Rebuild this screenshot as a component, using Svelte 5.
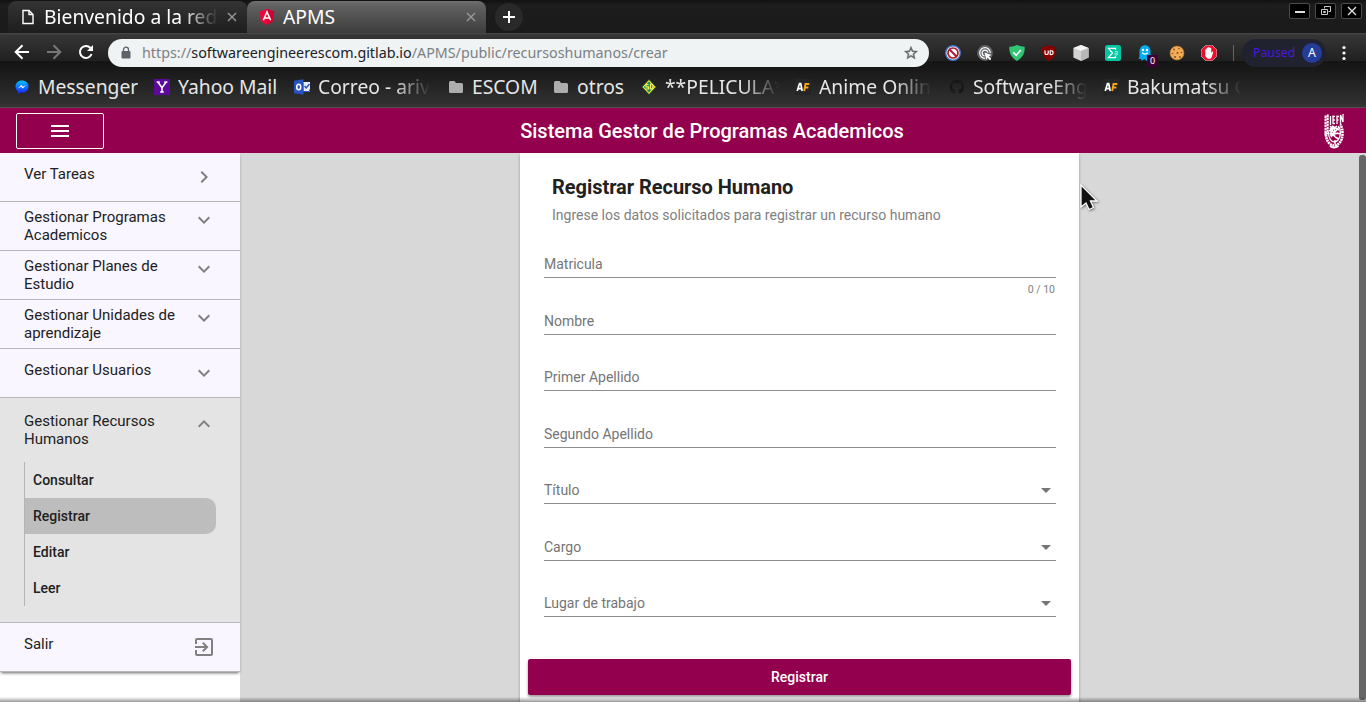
<script>
  const bookmarks = [
    { name: 'Messenger', icon: 'messenger', width: 140 },
    { name: 'Yahoo Mail', icon: 'yahoo', width: 140 },
    { name: 'Correo - ariv', icon: 'outlook', width: 154, fade: true },
    { name: 'ESCOM', icon: 'folder', width: 105 },
    { name: 'otros', icon: 'folder', width: 88 },
    { name: '**PELICULA*', icon: 'movie', width: 154, fade: true },
    { name: 'Anime Onlin', icon: 'anime', width: 154, fade: true },
    { name: 'SoftwareEng', icon: 'github', width: 154, fade: true },
    { name: 'Bakumatsu G', icon: 'anime', width: 154, fade: true }
  ];
  const extensions = ['block', 'click', 'shield', 'ublock', 'cube', 'sigma', 'ghost', 'cookie', 'adblock'];
  const menu = [
    { label: 'Ver Tareas', icon: 'right' },
    { label: 'Gestionar Programas Academicos', icon: 'down', tall: true },
    { label: 'Gestionar Planes de Estudio', icon: 'down', tall: true },
    { label: 'Gestionar Unidades de aprendizaje', icon: 'down', tall: true },
    { label: 'Gestionar Usuarios', icon: 'down' }
  ];
  const submenu = ['Consultar', 'Registrar', 'Editar', 'Leer'];
  const fields = [
    { label: 'Matricula', hint: '0 / 10' },
    { label: 'Nombre' },
    { label: 'Primer Apellido' },
    { label: 'Segundo Apellido' },
    { label: 'Título', select: true },
    { label: 'Cargo', select: true },
    { label: 'Lugar de trabajo', select: true }
  ];
</script>

{#snippet chevron(dir)}
  <svg class="chevron" width="24" height="24" viewBox="0 0 24 24" fill="#808080">
    {#if dir === 'right'}
      <path d="M10 6 8.59 7.41 13.17 12l-4.58 4.59L10 18l6-6z" />
    {:else if dir === 'down'}
      <path d="M16.59 8.59 12 13.17 7.41 8.59 6 10l6 6 6-6z" />
    {:else}
      <path d="m12 8-6 6 1.41 1.41L12 10.83l4.59 4.58L18 14z" />
    {/if}
  </svg>
{/snippet}

{#snippet close()}
  <svg width="10" height="10" viewBox="0 0 10 10" stroke="#999" stroke-width="1.4"><path d="M1 1l8 8M9 1l-8 8" /></svg>
{/snippet}

{#snippet bookmarkIcon(kind)}
  <svg width="16" height="16" viewBox="0 0 16 16">
    {#if kind === 'messenger'}
      <defs>
        <linearGradient id="msg" x1="0" y1="0" x2="0" y2="1"><stop offset="0" stop-color="#00c2ff" /><stop offset="1" stop-color="#1a22ff" /></linearGradient>
      </defs>
      <path d="M8 1.400C4.300 1.400 1.500 4 1.500 7.400c0 2 .9 3.600 2.400 4.700v2.500l2.200-1.200c.6.2 1.200.2 1.900.2 3.700 0 6.500-2.700 6.500-6.200S11.700 1.400 8 1.400z" fill="url(#msg)" />
      <path d="M3.900 9.500 7.200 6l1.700 1.700L12.100 6 8.700 9.500 7.100 7.800z" fill="#fff" />
    {:else if kind === 'yahoo'}
      <rect width="16" height="16" fill="#5b0a9b" />
      <path d="M4 3.200 8 8.800l4-5.600M8 8.500V13M2.600 3h3.200M10.200 3h3.200M6.200 13h3.600" stroke="#fff" stroke-width="1.500" fill="none" />
    {:else if kind === 'outlook'}
      <path d="M9 3h7v10H9z" fill="#e8eefb" />
      <path d="m10.500 7 1.700 1.800L15.500 5" fill="none" stroke="#2a56c6" stroke-width="1.500" />
      <path d="M9 13V3.500M9 12.500h6.500v-2" fill="none" stroke="#2a56c6" />
      <path d="m0 1.800 9.500-1.600v15.600L0 14.200z" fill="#2853c3" />
      <ellipse cx="4.700" cy="8" rx="2" ry="2.800" fill="none" stroke="#fff" stroke-width="1.500" />
    {:else if kind === 'folder'}
      <path d="M1 3.500q0-1.500 1.500-1.500h4l1.500 2h5.500q1.500 0 1.500 1.500v7q0 1.500-1.500 1.500h-11Q1 14 1 12.500z" fill="#adadad" />
    {:else if kind === 'movie'}
      <path d="m8 .5 7 7.500-7 7.500L1 8z" fill="#f1e622" stroke="#164e37" stroke-width=".7" />
      <path d="m8 2.500 5.200 5.500L8 13.500 2.800 8z" fill="#1d8f6c" />
      <path d="M7.500 5.500H5v2.300h2.500V10H4.500M9.500 5v5q2.500 0 2.500-2.500T9.500 5" fill="none" stroke="#f8f260" stroke-width="1.200" />
    {:else if kind === 'anime'}
      <rect width="16" height="16" rx="2" fill="#252525" />
      <path d="m2.200 12 2.300-7.500h1.200L7.200 12M3 9.700h3.600" fill="none" stroke="#fff" stroke-width="1.700" />
      <path d="m9.200 12 1.300-7h3.800M9.700 8.500h3.700" fill="none" stroke="#f7a21b" stroke-width="1.900" />
    {:else}
      <path d="M8 .8a7.200 7.200 0 0 0-2.300 14v-2c-2 .4-2.500-.8-2.700-1.400l-1-.8c1.200-.2 1.600.8 2.100 1.300.5.500 1.200.4 1.700.1.100-.6.300-.9.600-1.100-2.100-.3-3.300-1.200-3.300-3.700 0-.8.300-1.500.8-2-.1-.4-.2-1.200.1-2 .9 0 1.500.5 2 .8 1.300-.3 2.700-.3 4 0 .7-.4 1.300-.8 2-.8.300.8.200 1.600.1 2 .5.5.8 1.200.8 2 0 2.500-1.200 3.400-3.300 3.700.4.300.7.900.7 1.800v2A7.200 7.200 0 0 0 8 .8z" fill="#171717" />
    {/if}
  </svg>
{/snippet}

{#snippet extensionIcon(kind)}
  <svg width="16" height="16" viewBox="0 0 16 16">
    {#if kind === 'block'}
      <circle cx="8" cy="8" r="7.300" fill="#fff" stroke="#3e75c2" stroke-width="1.400" />
      <circle cx="8" cy="8" r="5" fill="none" stroke="#a7192c" stroke-width="1.700" />
      <path d="m4.500 4.500 7 7" stroke="#a7192c" stroke-width="1.900" />
    {:else if kind === 'click'}
      <circle cx="8" cy="8" r="7.900" fill="#606266" />
      <g fill="none" stroke="#fff" stroke-width="1.200"><path d="M8 13.300A5.300 5.300 0 1 1 13.300 8M7.500 10.800A2.900 2.900 0 1 1 10.900 7.500" /></g>
      <path d="m7.500 7.500 7 2.600-2.700 1.200 2.500 2.700-1.200 1.200-2.600-2.600-1.100 2.500z" fill="#fff" />
    {:else if kind === 'shield'}
      <path d="M8 0q4 1.800 7.700 1.800C16 8.500 13.500 13 8 16 2.500 13 0 8.500.3 1.800 4 1.800 8 0 8 0z" fill="#2fc574" />
      <path d="M4.300 7.300 7.200 10.200l4.600-5.200" fill="none" stroke="#fff" stroke-width="1.700" />
    {:else if kind === 'ublock'}
      <path d="M8 0q3 1.800 7 2c.2 7-1.500 11.300-7 14C2.500 13.300.8 9 1 2q4-.2 7-2z" fill="#870000" />
      <path d="M4 5.500v2.700q0 1.300 1.600 1.300t1.600-1.300V5.500" fill="none" stroke="#fff" stroke-width="1.200" />
      <path d="M9.200 5.800q2.900-.3 2.900 1.900T9.200 9.500z" fill="none" stroke="#fff" stroke-width="1.200" />
    {:else if kind === 'cube'}
      <path d="m8 0 7.600 3v9.500L8 16 .4 12.500V3z" fill="#d2d2d2" />
      <path d="m8 0 7.600 3L8 6 .4 3z" fill="#f4f4f4" /><path d="m8 6 7.600-3v9.500L8 16z" fill="#b8b8b8" />
    {:else if kind === 'sigma'}
      <rect width="16" height="16" rx="2.500" fill="#05c6a2" />
      <path d="M10.500 5V3.300H3.500L7.500 8l-4 4.700h7V11" fill="none" stroke="#fff" stroke-width="1.300" />
      <path d="M10 6.500h2.300V10H10V8.200h2" fill="none" stroke="#95ead9" stroke-width="1" />
    {:else if kind === 'ghost'}
      <path d="M2.500 6.500C2.500-1.700 13.500-1.700 13.500 6.500V12l1 3-3-1-2 2-2-2-3 1.800-.5-2-2.500.2 1-2.500z" fill="#00aef0" />
      <circle cx="6" cy="5" r="1.200" fill="#fff" /><circle cx="10" cy="5" r="1.200" fill="#fff" />
      <path d="M5 7.800q3 2.600 6 0" fill="none" stroke="#fff" stroke-width="1.200" />
    {:else if kind === 'cookie'}
      <circle cx="8" cy="8" r="7" fill="#f0ad55" stroke="#b9722b" stroke-width=".6" />
      <g fill="#8a4d1c"><circle cx="5" cy="4.500" r=".9" /><circle cx="10" cy="3.600" r=".8" /><circle cx="8.500" cy="8" r="1" /><circle cx="3.500" cy="8.500" r=".8" /><circle cx="12.500" cy="7.500" r=".8" /><circle cx="6" cy="12" r="1" /><circle cx="11" cy="12" r=".9" /></g>
    {:else}
      <path d="M4.800.2h6.400l4.600 4.600v6.400l-4.600 4.600H4.800L.2 11.200V4.800z" fill="#ee0d2c" stroke="#fff" stroke-width=".5" />
      <path d="M4.300 8V4.500q.7-.7 1.300 0V3q.7-.8 1.500 0v-.6q.8-.8 1.600 0V3q.8-.7 1.500 0v5l1-1.500q1.200-.3 1 .6L10.800 12 9.500 13.700h-3L4.300 11z" fill="#fff" />
    {/if}
  </svg>
{/snippet}

<div class="screen">
  <div class="browser">
    <div class="tabstrip">
      <div class="tab">
        <svg width="12" height="16" viewBox="0 0 12 16" fill="none" stroke="#fff" stroke-width="1.400"><path d="M1 1.500h6l4 4v9H1zM7 1.500v4h4" /></svg>
        <span class="tabname fade">Bienvenido a la red</span>
        {@render close()}
      </div>
      <div class="tab active">
        <svg width="16" height="16" viewBox="0 0 16 16"><path d="m8 0 7.200 2.600-1.100 9.600L8 16l-6.100-3.800L.8 2.600z" fill="#f4003a" /><path d="m8 0 7.200 2.600-1.100 9.600L8 16z" fill="#d0002f" /><path d="M4.300 11.200 8 2.900l3.700 8.300M5.700 8.900h4.600" fill="none" stroke="#fff" stroke-width="1.500" /></svg>
        <span class="tabname">APMS</span>
        {@render close()}
      </div>
      <div class="newtab"><svg width="12" height="12" viewBox="0 0 12 12" stroke="#fff" stroke-width="2"><path d="M6 0v12M0 6h12" /></svg></div>
      <div class="windowbuttons">
        <div><svg width="14" height="12" viewBox="0 0 14 12"><path d="M2 7h10" stroke="#ddd" stroke-width="2" /></svg></div>
        <div><svg width="14" height="12" viewBox="0 0 14 12" fill="none" stroke="#ccc"><path d="M5.500 3.500v-2h6v5h-2M2.500 4.500h6v5h-6zM4.500 6.500h2v1h-2z" /></svg></div>
        <div><svg width="14" height="12" viewBox="0 0 14 12" stroke="#ddd" stroke-width="1.400"><path d="m3 2 8 8M11 2l-8 8" /></svg></div>
      </div>
    </div>

    <div class="toolbar">
      <div class="nav">
        <svg width="16" height="16" viewBox="0 0 16 16" fill="none" stroke="#fff" stroke-width="2"><path d="M15 8H2M8.500 1.200 1.700 8l6.800 6.800" /></svg>
        <svg width="16" height="16" viewBox="0 0 16 16" fill="none" stroke="#777" stroke-width="2"><path d="M1 8h13M7.500 1.200 14.300 8l-6.800 6.800" /></svg>
        <svg width="16" height="16" viewBox="0 0 16 16" fill="none" stroke="#fff" stroke-width="2"><path d="M13.600 10A6 6 0 1 1 12.500 4" /><path d="M15 1v6H9z" fill="#fff" stroke="none" /></svg>
      </div>
      <div class="address">
        <svg width="10" height="14" viewBox="0 0 10 14"><rect x=".5" y="5" width="9" height="7.500" rx="1" fill="#5f6368" /><path d="M2.500 5.500V3.700a2.500 2.500 0 0 1 5 0v1.800" fill="none" stroke="#5f6368" stroke-width="1.300" /></svg>
        <span class="url">https://<b>softwareengineerescom.gitlab.io</b>/APMS/public/recursoshumanos/crear</span>
        <svg width="16" height="16" viewBox="0 0 24 24" fill="#5f6368"><path d="m22 9.240-7.190-.62L12 2 9.190 8.630 2 9.240l5.460 4.730L5.820 21 12 17.270 18.180 21l-1.630-7.030zM12 15.400l-3.760 2.270 1-4.280-3.320-2.880 4.380-.38L12 6.100l1.710 4.040 4.380.38-3.320 2.880 1 4.280z" stroke="#5f6368" stroke-width=".6" /></svg>
      </div>
      <div class="extensions">
        {#each extensions as kind}
          <div class="extension">
            {@render extensionIcon(kind)}
            {#if kind === 'ghost'}<span class="badge">0</span>{/if}
          </div>
        {/each}
      </div>
      <div class="separator"></div>
      <div class="profile"><span>Paused</span><span class="avatar">A</span></div>
      <svg class="dots" width="4" height="16" viewBox="0 0 4 16" fill="#fff"><circle cx="2" cy="2.500" r="1.600" /><circle cx="2" cy="8" r="1.600" /><circle cx="2" cy="13.500" r="1.600" /></svg>
    </div>

    <div class="bookmarks">
      {#each bookmarks as item}
        <div class="bookmark" style:width="{item.width}px">
          {@render bookmarkIcon(item.icon)}
          <span class:fade={item.fade}>{item.name}</span>
        </div>
      {/each}
    </div>
  </div>

  <header>
    <button class="hamburger" aria-label="Menu"><svg width="18" height="12" viewBox="0 0 18 12" fill="#fff"><path d="M0 0h18v2H0zM0 5h18v2H0zM0 10h18v2H0z" /></svg></button>
    <h1>Sistema Gestor de Programas Academicos</h1>
    <svg class="crest" width="22" height="38" viewBox="0 0 22 38" fill="none" stroke="#fff">
      <path d="M2.500 3.500v20M4.700 2.500v20" stroke-width="2" stroke-dasharray="2.500 .6" />
      <path d="M7.500 4v9M10 12V3.500M10 4.500h2M10 8h2M10 11.500h2M14 12V3.500M14 4.500h2M14 8h1.500M17.500 13V3l2.500 7V2" stroke-width="1.300" />
      <path d="M3 20c-1 17 16 18 16.500 2q0-6-2-9" stroke-width="2.600" stroke-dasharray="2 .6" />
      <path d="M5.500 20c0 13 11 13 12 1q0-4-2-7" stroke-width="1.300" />
      <path d="m7 14 3 3 4-3M8 25l8-10M6.500 21.500h11M11.500 15v10M12 28v4M8 17v6l7-2M6 19l5-3M9 14l7 4M12 25l4 2M7 16l5 6" stroke-width="1.500" />
      <path d="M7 34q4 3 8.500 0" stroke-width="2" />
    </svg>
  </header>

  <div class="content">
    <aside>
      <nav>
        {#each menu as item}
          <div class="item" class:tall={item.tall}>
            <span>{item.label}</span>
            {@render chevron(item.icon)}
          </div>
        {/each}
        <div class="group">
          <div class="item open">
            <span>Gestionar Recursos Humanos</span>
            {@render chevron('up')}
          </div>
          <div class="submenu">
            {#each submenu as name}
              <div class="subitem" class:selected={name === 'Registrar'}>{name}</div>
            {/each}
          </div>
        </div>
        <div class="item">
          <span>Salir</span>
          <svg class="exit" width="24" height="24" viewBox="0 0 24 24" fill="#808080"><path d="M10.090 15.590 11.500 17l5-5-5-5-1.410 1.410L12.670 11H3v2h9.670zM19 3H5a2 2 0 0 0-2 2v4h2V5h14v14H5v-4H3v4a2 2 0 0 0 2 2h14a2 2 0 0 0 2-2V5a2 2 0 0 0-2-2z" /></svg>
        </div>
      </nav>
    </aside>
    <main>
      <section class="card">
        <div class="heading">
          <h2>Registrar Recurso Humano</h2>
          <p>Ingrese los datos solicitados para registrar un recurso humano</p>
        </div>
        <div class="fields">
          {#each fields as field}
            <div class="field">
              <div class="control">
                <span>{field.label}</span>
                {#if field.select}<i class="arrow"></i>{/if}
              </div>
              {#if field.hint}<small>{field.hint}</small>{/if}
            </div>
          {/each}
        </div>
        <button class="submit">Registrar</button>
      </section>
    </main>
    <div class="scrollbar"></div>
  </div>
  <div class="bottomshade"></div>
  <svg class="cursor" width="20" height="28" viewBox="0 0 20 28"><path d="M1 1v22l5-4 3 6.500 4.500-2-3-6.500H17z" fill="#111" stroke="#fff" stroke-width="1.300" /></svg>
</div>

<style>
  :global(body) { margin: 0; overflow: hidden; }
  * { box-sizing: border-box; }
  svg { display: block; flex: none; }
  .screen { position: relative; width: 1366px; height: 702px; display: flex; flex-direction: column; overflow: hidden; font-family: Roboto, sans-serif; background: #d8d8d8; }

  .browser { height: 108px; flex: none; border-bottom: 1px solid #505050; font-family: "Noto Sans", sans-serif; background: #1b1b1b; }
  .tabstrip { height: 33px; display: flex; padding: 1px 4px 0 8px; background: linear-gradient(#111, #1d1d1d 5px, #1a1a1a); }
  .tab { width: 239px; height: 32px; display: flex; align-items: center; padding: 0 10px 0 14px; border-radius: 8px 8px 0 0; background: linear-gradient(#343434, #1d1d1d); color: #fff; font-size: 19.300px; }
  .tab.active { background: linear-gradient(#707070, #606060 5px, #3d3d3d); padding-left: 12px; }
  .tabname { flex: 1; margin: 0 9px 0 10px; line-height: 30px; white-space: nowrap; overflow: hidden; }
  .active .tabname { margin-left: 8px; }
  .fade { mask-image: linear-gradient(90deg, #000 calc(100% - 36px), transparent); }
  .newtab { width: 28px; height: 28px; margin: 2px 0 0 9px; border-radius: 50%; background: #292929; display: grid; place-items: center; }
  .windowbuttons { margin-left: auto; display: flex; gap: 5px; padding-top: 2px; }
  .windowbuttons div { width: 21px; height: 16px; border: 1px solid #4b4b4b; background: #000; border-radius: 2px; display: grid; place-items: center; }

  .toolbar { height: 34px; display: flex; align-items: center; padding: 6px 20px 0 14px; background: linear-gradient(#4a4a4a, #363636 2px, #202020 28px, #0e0e0e 29px, #171717 30px); }
  .nav { display: flex; gap: 16px; width: 94px; padding-bottom: 2px; }
  .address { width: 821px; height: 28px; flex: none; display: flex; align-items: center; padding: 0 10px 0 13px; border-radius: 14px; background: #eff3f4; }
  .url { flex: 1; margin-left: 11px; font-size: 14.300px; line-height: 28px; color: #7c8083; white-space: nowrap; }
  .url b { font-weight: 400; color: #202124; }
  .extensions { display: flex; gap: 16px; margin-left: 16px; }
  .extension { position: relative; }
  .badge { position: absolute; left: 10px; top: 10px; width: 11px; height: 12px; background: #3d0035; color: #fff; font-size: 9px; line-height: 12px; text-align: center; border-radius: 1px; }
  .separator { width: 1px; height: 16px; margin: 0 8px 0 16px; background: #646464; }
  .profile { width: 84px; height: 28px; border-radius: 14px; background: #20222f; display: flex; align-items: center; justify-content: space-between; padding: 0 4px 1px 11px; color: #4b17dc; font-size: 12.300px; }
  .avatar { width: 20px; height: 20px; border-radius: 50%; background: #253d99; color: #fff; line-height: 20px; text-align: center; }
  .dots { margin-left: 16px; }

  .bookmarks { height: 40px; display: flex; align-items: center; padding-left: 14px; background: linear-gradient(#171717, #333); }
  .bookmark { display: flex; align-items: center; gap: 8px; flex: none; color: #e6e6e6; font-size: 19.300px; }
  .bookmark span { max-width: 114px; white-space: nowrap; overflow: hidden; line-height: 30px; }

  header { height: 45px; flex: none; display: flex; align-items: center; justify-content: space-between; padding: 0 21px 0 16px; background: #93004d; color: #fff; }
  .hamburger { width: 88px; height: 36px; display: grid; place-items: center; padding: 0; border: 1px solid #fff; border-radius: 2px; background: none; }
  h1 { margin: 0 0 0 15px; font-size: 20px; line-height: 28px; font-weight: 500; flex: 1; text-align: center; }
  .crest { margin-left: 18px; }

  .content { flex: 1; min-height: 0; display: flex; background: #d8d8d8; }
  aside { width: 240px; background: #fff; flex: none; }
  nav { background: #f9f6ff; box-shadow: 0 2px 3px -1px #666; }
  .item { height: 49px; display: flex; align-items: flex-start; padding: 12px 24px 0; border-bottom: 1px solid #b7b7b7; font-size: 15px; line-height: 18px; color: #212121; }
  .item span { width: 156px; margin-right: 12px; }
  .item .chevron, .exit { margin: 0 -12px 0 0; }
  .item.tall { padding-top: 6px; }
  .group { height: 225px; background: #e4e4e4; border-bottom: 1px solid #b7b7b7; }
  .item.open { height: 64px; border: 0; padding-top: 14px; }
  .submenu { margin-left: 24px; width: 192px; border-left: 1px solid #b4b4b4; }
  .subitem { height: 36px; line-height: 36px; padding-left: 8px; font-size: 14px; font-weight: 500; color: #212121; }
  .selected { background: #bdbdbd; border-radius: 0 10px 10px 0; }

  main { flex: 1; padding-left: 280px; }
  .card { width: 559px; height: 560px; padding: 21px 8px 0; background: #fff; box-shadow: 0 2px 3px rgba(0,0,0,.3); display: flex; flex-direction: column; }
  .heading { padding-left: 24px; height: 85px; }
  h2 { margin: 0; font-size: 20px; line-height: 26px; font-weight: 700; letter-spacing: -.04px; color: #212121; }
  p { margin: 5px 0 0; font-size: 14px; line-height: 20px; color: #808080; }
  .fields { padding: 0 15px 0 16px; height: 400px; }
  .field { height: 56.500px; }
  .control { height: 19px; display: flex; align-items: flex-start; justify-content: space-between; border-bottom: 1px solid #8e8e8e; font-size: 14px; line-height: 10px; color: #757575; }
  .arrow { border: 5px solid transparent; border-top-color: #757575; border-bottom: 0; margin: 3px 5px 0 0; }
  small { display: block; text-align: right; font-size: 10.500px; line-height: 12px; margin: 6px 1px 0 0; color: #808080; }
  .submit { height: 36px; flex: none; border: 0; border-radius: 2px; padding: 0; background: #93004d; color: #fff; font: 500 14px Roboto, sans-serif; box-shadow: 0 2px 3px rgba(0,0,0,.4); }
  .scrollbar { width: 7px; margin: 2px 0; background: #666; border-radius: 3px; }
  .bottomshade { position: absolute; left: 0; right: 0; bottom: 0; height: 5px; background: linear-gradient(transparent, rgba(0,0,0,.4)); }
  .cursor { position: absolute; left: 1080px; top: 184px; filter: drop-shadow(1px 1px 1px #777); }
</style>
